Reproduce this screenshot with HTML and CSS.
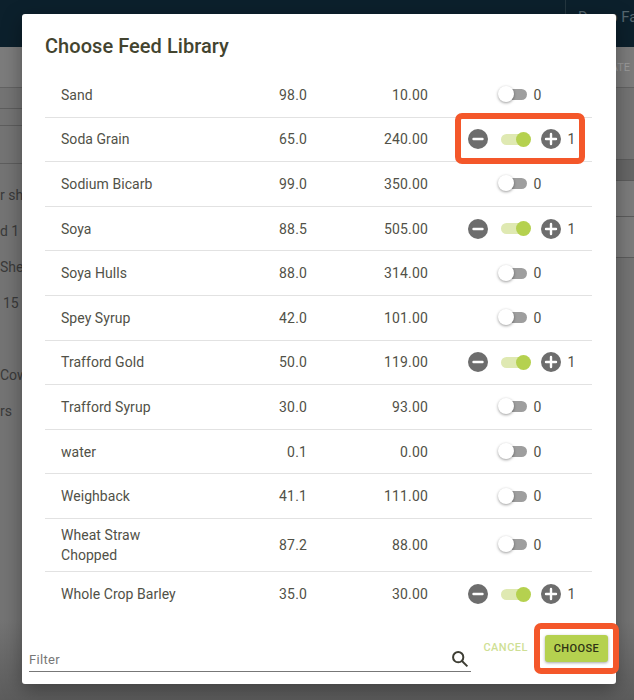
FILE: index.html
```html
<!DOCTYPE html>
<html lang="en">
<head>
    <meta charset="UTF-8">
    <title>Choose Feed Library</title>
    <link rel="stylesheet" href="styles.css">
</head>
<body>
    <div class="page">
        <div class="topbar"><span class="farm">Demo Fa</span></div>
        <div class="subbar"><span class="action">ATE</span></div>
        <div class="page-body">
            <div class="page-left">
                <div class="page-line first"></div>
                <div class="page-line second"></div>
                <div class="page-line third"></div>
                <div class="page-text">r sh</div>
                <div class="page-text">d 1</div>
                <div class="page-text">She</div>
                <div class="page-text indent">15</div>
                <div class="page-text gap">Cow</div>
                <div class="page-text">rs</div>
            </div>
            <div class="page-right">
                <div class="side-row a"></div>
                <div class="side-row b"></div>
                <div class="side-row c"></div>
                <div class="side-row d"></div>
            </div>
        </div>
    </div>

    <div class="dialog">
        <h2>Choose Feed Library</h2>
        <div class="feed-list">
            <div class="feed-row">
                <span>Sand</span><span class="num">98.0</span><span class="num">10.00</span>
                <div class="controls"><span class="switch"></span><span class="count">0</span></div>
            </div>
            <div class="feed-row">
                <span>Soda Grain</span><span class="num">65.0</span><span class="num">240.00</span>
                <div class="controls">
                    <svg class="step" viewBox="0 0 20 20"><circle cx="10" cy="10" r="10"/><path d="M5.5 10h9"/></svg>
                    <span class="switch on"></span>
                    <svg class="step" viewBox="0 0 20 20"><circle cx="10" cy="10" r="10"/><path d="M5 10h10M10 5v10"/></svg>
                    <span class="count">1</span>
                </div>
                <div class="highlight row-mark"></div>
            </div>
            <div class="feed-row">
                <span>Sodium Bicarb</span><span class="num">99.0</span><span class="num">350.00</span>
                <div class="controls"><span class="switch"></span><span class="count">0</span></div>
            </div>
            <div class="feed-row">
                <span>Soya</span><span class="num">88.5</span><span class="num">505.00</span>
                <div class="controls">
                    <svg class="step" viewBox="0 0 20 20"><circle cx="10" cy="10" r="10"/><path d="M5.5 10h9"/></svg>
                    <span class="switch on"></span>
                    <svg class="step" viewBox="0 0 20 20"><circle cx="10" cy="10" r="10"/><path d="M5 10h10M10 5v10"/></svg>
                    <span class="count">1</span>
                </div>
            </div>
            <div class="feed-row">
                <span>Soya Hulls</span><span class="num">88.0</span><span class="num">314.00</span>
                <div class="controls"><span class="switch"></span><span class="count">0</span></div>
            </div>
            <div class="feed-row">
                <span>Spey Syrup</span><span class="num">42.0</span><span class="num">101.00</span>
                <div class="controls"><span class="switch"></span><span class="count">0</span></div>
            </div>
            <div class="feed-row">
                <span>Trafford Gold</span><span class="num">50.0</span><span class="num">119.00</span>
                <div class="controls">
                    <svg class="step" viewBox="0 0 20 20"><circle cx="10" cy="10" r="10"/><path d="M5.5 10h9"/></svg>
                    <span class="switch on"></span>
                    <svg class="step" viewBox="0 0 20 20"><circle cx="10" cy="10" r="10"/><path d="M5 10h10M10 5v10"/></svg>
                    <span class="count">1</span>
                </div>
            </div>
            <div class="feed-row">
                <span>Trafford Syrup</span><span class="num">30.0</span><span class="num">93.00</span>
                <div class="controls"><span class="switch"></span><span class="count">0</span></div>
            </div>
            <div class="feed-row">
                <span>water</span><span class="num">0.1</span><span class="num">0.00</span>
                <div class="controls"><span class="switch"></span><span class="count">0</span></div>
            </div>
            <div class="feed-row">
                <span>Weighback</span><span class="num">41.1</span><span class="num">111.00</span>
                <div class="controls"><span class="switch"></span><span class="count">0</span></div>
            </div>
            <div class="feed-row tall">
                <span>Wheat Straw<br>Chopped</span><span class="num">87.2</span><span class="num">88.00</span>
                <div class="controls"><span class="switch"></span><span class="count">0</span></div>
            </div>
            <div class="feed-row">
                <span>Whole Crop Barley</span><span class="num">35.0</span><span class="num">30.00</span>
                <div class="controls">
                    <svg class="step" viewBox="0 0 20 20"><circle cx="10" cy="10" r="10"/><path d="M5.5 10h9"/></svg>
                    <span class="switch on"></span>
                    <svg class="step" viewBox="0 0 20 20"><circle cx="10" cy="10" r="10"/><path d="M5 10h10M10 5v10"/></svg>
                    <span class="count">1</span>
                </div>
            </div>
        </div>
        <div class="dialog-footer">
            <div class="filter">
                <span>Filter</span>
                <svg class="search" viewBox="0 0 20 20"><circle cx="8" cy="8" r="5.7"/><path d="M12.2 12.2l6 6"/></svg>
            </div>
            <span class="cancel">CANCEL</span>
            <div class="choose-wrap">
                <button class="choose">CHOOSE</button>
                <div class="highlight button-mark"></div>
            </div>
        </div>
    </div>
</body>
</html>
```

FILE: styles.css
```css
* {
    box-sizing: border-box;
}

body {
    margin: 0;
    width: 634px;
    height: 700px;
    overflow: hidden;
    font-family: Roboto, "Liberation Sans", sans-serif;
    font-size: 14px;
    color: #515147;
    background-color: #6d6d6d;
}

.page {
    height: 700px;
    background: linear-gradient(180deg, #747474 0, #747474 620px, #5c5c5c 700px);
    color: #3e3e3e;
}

.topbar {
    height: 47px;
    background-color: #0c202c;
    display: flex;
    justify-content: flex-end;
}

.farm {
    width: 69px;
    padding: 8px 0 0 12px;
    font-size: 15px;
    white-space: nowrap;
    color: #56666f;
    border-left: 1px solid #24363f;
}

.subbar {
    height: 41px;
    background-color: #7c7c7c;
    border-bottom: 1px solid #636363;
    display: flex;
    justify-content: flex-end;
    align-items: center;
}

.action {
    padding-right: 4px;
    font-size: 11px;
    color: #9c9c9c;
}

.page-body {
    display: flex;
    justify-content: space-between;
}

.page-left {
    width: 22px;
}

.page-line {
    border-bottom: 1px solid #5e5e5e;
}

.page-line.first {
    height: 21px;
}

.page-line.second {
    height: 17px;
}

.page-line.third {
    height: 38px;
    margin-bottom: 13px;
}

.page-text {
    height: 36px;
    line-height: 36px;
    white-space: nowrap;
    color: #3a3a3a;
}

.page-text.indent {
    padding-left: 3px;
}

.page-text.gap {
    margin-top: 36px;
}

.page-right {
    width: 18px;
}

.side-row {
    border-bottom: 1px solid #5c5c5c;
}

.side-row.a {
    height: 72px;
}

.side-row.b {
    height: 21px;
    background-color: #666;
}

.side-row.c {
    height: 36px;
    background-color: #7c7c7c;
}

.side-row.d {
    height: 41px;
    background-color: #7c7c7c;
}

.dialog {
    position: absolute;
    left: 22px;
    top: 14px;
    width: 594px;
    height: 670px;
    background-color: white;
    border-radius: 3px;
    padding: 21px 24px 0 23px;
    box-shadow: 0 6px 20px rgba(0, 0, 0, 0.35);
}

h2 {
    margin: 0 0 15px;
    font-size: 20px;
    line-height: 23px;
    font-weight: 500;
    letter-spacing: 0.05px;
    color: #43442f;
}

.feed-row {
    position: relative;
    display: grid;
    grid-template-columns: 161px 85px 121px 1fr;
    align-items: center;
    height: 44.6px;
    padding-left: 16px;
    border-bottom: 1px solid #e2e2e2;
    letter-spacing: 0.05px;
    line-height: 20px;
}

.feed-row.tall {
    height: 53px;
}

.feed-row:last-child {
    border-bottom: none;
}

.num {
    text-align: right;
    letter-spacing: 0.15px;
}

.controls {
    display: flex;
    align-items: center;
    justify-content: center;
    padding-left: 23px;
}

.step {
    width: 20px;
    height: 20px;
}

.step circle {
    fill: #6d6d6d;
}

.step path {
    stroke: white;
    stroke-width: 2.4;
    stroke-linecap: round;
    fill: none;
}

.switch {
    position: relative;
    width: 22px;
    height: 11px;
    margin-left: 7px;
    border-radius: 6px;
    background-color: #9e9e9e;
}

.switch::after {
    content: "";
    position: absolute;
    left: -7px;
    top: -3px;
    width: 16px;
    height: 16px;
    border-radius: 50%;
    background-color: white;
    box-shadow: 0 1px 3px rgba(0, 0, 0, 0.4);
}

.switch + .count {
    margin: 0 4px 0 7px;
}

.switch.on {
    width: 24px;
    margin: 0 16px 0 13px;
    background-color: #dfe9b2;
}

.switch.on::after {
    left: 15px;
    top: -2px;
    width: 15px;
    height: 15px;
    background-color: #b5d14f;
    box-shadow: none;
}

.step + .count {
    margin-left: 7px;
}

.highlight {
    position: absolute;
    border: 6px solid #f4572a;
    border-radius: 7px;
}

.row-mark {
    left: 410px;
    top: -5px;
    width: 130px;
    height: 51px;
}

.dialog-footer {
    position: absolute;
    left: 7px;
    right: 8px;
    bottom: 12px;
    display: flex;
    align-items: flex-end;
}

.filter {
    position: relative;
    width: 444px;
    height: 28px;
    padding-top: 8px;
    font-size: 13px;
    color: #777;
    border-bottom: 1px solid #777;
    letter-spacing: 0.3px;
}

.search {
    position: absolute;
    right: 2px;
    top: 6px;
    width: 18px;
    height: 18px;
    fill: none;
    stroke: #3d3d33;
    stroke-width: 2.2;
}

.cancel {
    margin: 0 0 18px 12px;
    font-size: 11px;
    font-weight: 500;
    letter-spacing: 0.5px;
    color: #cfdf95;
}

.choose-wrap {
    position: relative;
    margin: 0 0 10px 17px;
}

.choose {
    display: block;
    width: 63px;
    height: 27px;
    padding: 0;
    border: none;
    border-radius: 3px;
    font-family: inherit;
    font-size: 11px;
    font-weight: 500;
    letter-spacing: 0.4px;
    color: #2f3315;
    background-color: #b5d14f;
    box-shadow: 0 1px 3px rgba(0, 0, 0, 0.35);
}

.button-mark {
    left: -11px;
    top: -12px;
    width: 85px;
    height: 51px;
}
```
